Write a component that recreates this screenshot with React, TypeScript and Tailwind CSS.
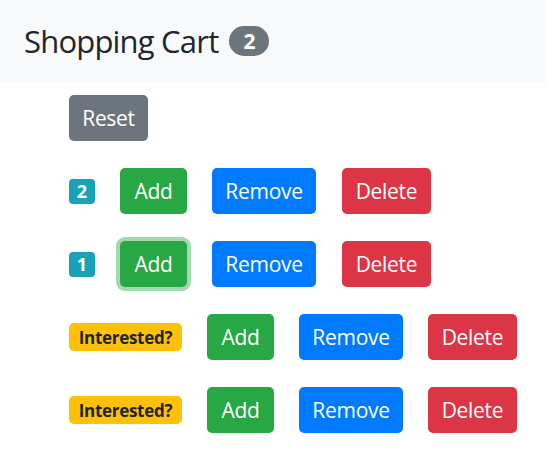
import React from "react";

const font = { fontFamily: '"Open Sans", "Noto Sans", sans-serif' };

function Btn({ color, w, label, focus, extra }: { color: string; w: string; label: string; focus?: boolean; extra?: string }) {
  return (
    <button
      className={`${color} ${w} ${extra ?? ""} h-[46px] rounded-[5px] text-white text-[21px] leading-none flex items-center justify-center tracking-[-0.3px] ${
        focus ? "shadow-[0_0_0_4px_rgba(72,180,97,0.5)]" : ""
      }`}
    >
      {label}
    </button>
  );
}

export default function App() {
  const rows = [
    { kind: "num", n: "2" },
    { kind: "num", n: "1", focus: true },
    { kind: "int" },
    { kind: "int" },
  ];
  return (
    <div className="w-[546px] h-[457px] bg-white text-[#212529]" style={font}>
      <div className="h-[82px] bg-[#f8f9fa] flex items-center pl-[24px]">
        <span className="text-[31px] leading-none tracking-[-0.8px]">Shopping Cart</span>
        <span className="ml-[11px] w-[40px] h-[30px] rounded-full bg-[#6c757d] text-white text-[21px] font-bold flex items-center justify-center leading-none">
          2
        </span>
      </div>
      <div className="pl-[69px] pt-[13px] flex flex-col gap-[27px]">
        <div className="flex">
          <Btn color="bg-[#6c757d]" w="w-[79px]" label="Reset" />
        </div>
        {rows.map((r, i) => (
          <div key={i} className="flex items-center gap-[25px]">
            {r.kind === "num" ? (
              <span className="w-[26px] h-[25px] rounded-[4px] bg-[#17a2b8] text-white text-[18px] font-bold flex items-center justify-center leading-none">
                {r.n}
              </span>
            ) : (
              <span className="w-[113px] h-[28px] rounded-[5px] bg-[#ffc107] text-[#212529] text-[17px] font-bold flex items-center justify-center leading-none tracking-[-0.3px]">
                Interested?
              </span>
            )}
            <Btn color="bg-[#28a745]" w="w-[67px]" label="Add" focus={!!r.focus} />
            <Btn color="bg-[#007bff]" w="w-[104px]" label="Remove" />
            <Btn color="bg-[#dc3545]" w="w-[89px]" label="Delete" extra={r.kind === "num" ? "ml-px" : ""} />
          </div>
        ))}
      </div>
    </div>
  );
}
